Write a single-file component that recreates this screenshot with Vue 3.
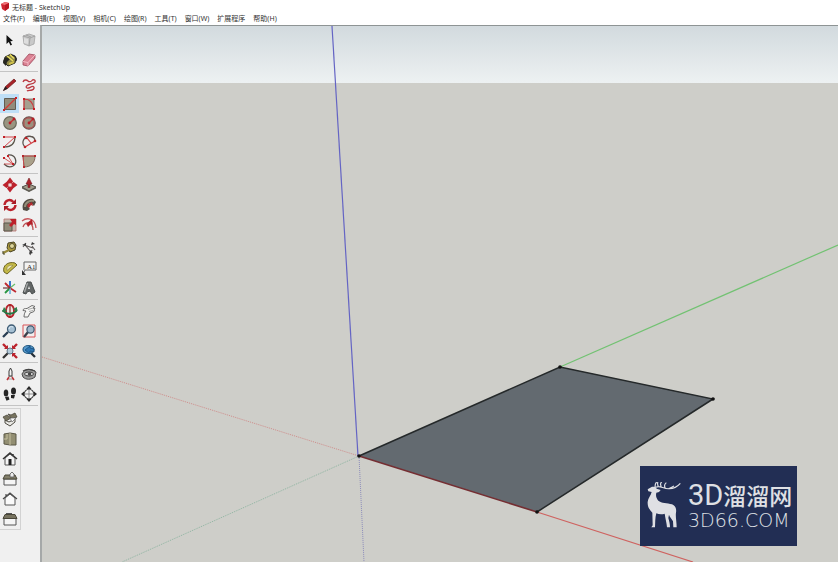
<script setup>
import { ref } from 'vue'

const menus = ['文件(F)', '编辑(E)', '视图(V)', '相机(C)', '绘图(R)', '工具(T)', '窗口(W)', '扩展程序', '帮助(H)']

const active = ref('矩形')

const groups = [
  {
    dense: false,
    tools: [
      { name: '选择', art: '<path d="M6.500 5v9l2.300-2.100 1.700 3.600 1.500-.7-1.700-3.500 2.700-.4z" fill="#111"/>' },
      { name: '制作组件', art: '<path d="M4 6l6-2 6 2-1 8-5 2-5-2z" fill="#c9c9c9" stroke="#a3a3a3" stroke-width=".8"/><path d="M4 6l7 2 5-2M11 8l-1 8M7 5l5 2" fill="none" stroke="#999" stroke-width=".8"/><path d="M5 8l4 1v5l-4-1z" fill="#dedede"/>' },
      { name: '材质', art: '<path d="M5 7l6-3 5 4-1 5-7 3-4-4z" fill="#8d8748" stroke="#2b2a1a" stroke-width="1"/><path d="M3 13c0-6 4-7 7-4l-3 3-1 4z" fill="#262620"/><path d="M7 6l6 5M10 4.500l4 4" stroke="#e8dc5c" stroke-width="1.500"/><path d="M9 14l5-2" stroke="#cfc14c" stroke-width="2"/><path d="M12 5c3 0 5 3 4 6" fill="none" stroke="#222" stroke-width="1.200"/>' },
      { name: '擦除', art: '<path d="M4 11l6-7 6 1v3l-7 8-5-1z" fill="#db8293" stroke="#9e4659" stroke-width=".8"/><path d="M4 11.500l5 1 7-7.500M9 12.500V16" fill="none" stroke="#f3bdc7" stroke-width="1"/>' },
    ],
  },
  {
    dense: true,
    tools: [
      { name: '直线', art: '<path d="M3.500 15.500l2-4L14 4l2 2-8.500 7.500z" fill="#a92328" stroke="#6a1719" stroke-width=".7"/><path d="M3 16l2.500-4.500 2 2z" fill="#222"/>' },
      { name: '手绘线', art: '<path d="M4 7c1-3 4-2 5-1s3 1 4-.5 4-.5 3 1.500-4 2-6 2.500-4 2.500-2 3.500 4-2 6-1.500 1 3-1 3.500-4 0-5 1" fill="none" stroke="#bb3a42" stroke-width="1.300"/>' },
      { name: '矩形', art: '<path d="M4.500 4.500h11v11h-11z" fill="#918d7c" stroke="#625c51" stroke-width="1"/><path d="M4 16L16 4" stroke="#d23a35" stroke-width="1.200"/><path d="M3 15h2v2H3zM15 3h2v2h-2z" fill="#c92128"/>' },
      { name: '旋转矩形', art: '<path d="M5 5h10v10H5z" fill="#a5a08f" stroke="#777267" stroke-width=".8"/><path d="M5 15V5c6 0 9 3 10 10" fill="none" stroke="#cf363b" stroke-width="1.100"/><path d="M4 4h2v2H4zM4 14h2v2H4zM14 14h2v2h-2zM14 4h2v2h-2z" fill="#c61f27"/>' },
      { name: '圆', art: '<circle cx="10" cy="10" r="6.300" fill="#999581" stroke="#6a695b" stroke-width="1.200"/><path d="M10 10l4-4" stroke="#c92a31" stroke-width="1.200"/><circle cx="10" cy="10" r="1.400" fill="#b81e27"/><circle cx="14" cy="6" r="1.400" fill="#b81e27"/>' },
      { name: '多边形', art: '<circle cx="10" cy="10" r="6.200" fill="#9a907e" stroke="#6a5751" stroke-width="1.300"/><path d="M7.500 5h5L15 7.500v5L12.500 15h-5L5 12.500v-5z" fill="none" stroke="#b94448" stroke-width="1"/><path d="M10 10l4-4" stroke="#c92a31" stroke-width="1.300"/><circle cx="10" cy="10" r="1.400" fill="#b81e27"/><circle cx="14" cy="6" r="1.400" fill="#b81e27"/>' },
      { name: '圆弧', art: '<path d="M4 5h11L4 15" fill="none" stroke="#cf4448" stroke-width="1"/><path d="M15 5c0 6-3 10-11 10" fill="none" stroke="#59554a" stroke-width="1.200"/><path d="M3 4h2v2H3zM14 4h2v2h-2zM3 14h2v2H3z" fill="#c12127"/>' },
      { name: '两点圆弧', art: '<path d="M6 15C1 10 6 3 12 4.500c3 .5 4 2.500 4 4.500" fill="none" stroke="#5e5550" stroke-width="1.300"/><path d="M6 15L16 9M8 6l4 5" fill="none" stroke="#cf3f44" stroke-width="1.200"/><circle cx="6" cy="15" r="1.300" fill="#bd2329"/><circle cx="16" cy="9" r="1.300" fill="#bd2329"/><circle cx="7" cy="6" r="1.300" fill="#bd2329"/>' },
      { name: '三点圆弧', art: '<path d="M8 4c8-1 10 8 5 11-4 2-7 0-9-2" fill="none" stroke="#56524b" stroke-width="1.300"/><path d="M4 7l9 6M8 5l5 8H4" fill="none" stroke="#ce4849" stroke-width=".9"/><path d="M3 6h2v2H3zM7 4h2v2H7zM12 12h2v2h-2z" fill="#c12127"/>' },
      { name: '扇形', art: '<path d="M4 5h12c0 7-4 11-11 11z" fill="#aaa18b" stroke="#7d695c" stroke-width="1"/><path d="M4 5h12M4 5l1 11" stroke="#c74c4c" stroke-width="1"/><path d="M3 4h2v2H3zM15 4h2v2h-2zM4 15h2v2H4z" fill="#b5282d"/>' },
    ],
  },
  {
    dense: false,
    tools: [
      { name: '移动', art: '<path d="M10 2.500l3.500 4.500-2 1.500h-3L6.500 7zM10 17.500l3.500-4.500-2-1.500h-3L6.500 13zM2.500 10L7 6.500l1.500 2v3L7 13.500zM17.500 10L13 6.500l-1.500 2v3l1.500 2z" fill="#bc222c"/><circle cx="10" cy="10" r="1.300" fill="#f0d9da"/>' },
      { name: '推/拉', art: '<path d="M3 12l7-3 7 3-7 4z" fill="#a09c8a" stroke="#535048" stroke-width="1"/><path d="M3 12l7 4 7-4v1.500L10 17l-7-3.500z" fill="#5b584f"/><path d="M9 12.500V9H7l3-6 3 6h-2v3.500z" fill="#ac232b" stroke="#711e21" stroke-width=".6"/>' },
      { name: '旋转', art: '<path d="M4.500 10c.5-5 5.500-6.500 9-3M15.500 10c-.5 5-5.500 6.500-9 3" fill="none" stroke="#bb222c" stroke-width="2.400"/><path d="M16 4v5h-5zM4 16v-5h5z" fill="#a91c26"/>' },
      { name: '路径跟随', art: '<path d="M4 15C2 7 8 3 14 4l3 3-2 4-3-3c-4 0-3 4-1 6l-3 2z" fill="#514b42"/><path d="M6 12c0-4 4-7 9-6" fill="none" stroke="#958e79" stroke-width="2"/><path d="M9 9l4-2 1 4-2-1-2 3-2-2z" fill="#b3292e"/>' },
      { name: '缩放', art: '<path d="M4 4h12v12H4z" fill="#c3b6ab" stroke="#b66f6d" stroke-width=".8"/><path d="M4 8h8v8H4z" fill="#918b79" stroke="#59564b"/><path d="M10 4h6v6l-2-1-3 3-2-2 3-3z" fill="#bd202a"/>' },
      { name: '偏移', art: '<path d="M4 12c2-6 10-6 10 3" fill="none" stroke="#bb5052" stroke-width="1.300"/><path d="M3 6c5-4 13-3 14 7" fill="none" stroke="#c75459" stroke-width="1.300"/><path d="M7 9l6-5 1 6-2-1-3 3-1-2z" fill="#b52129"/>' },
    ],
  },
  {
    dense: false,
    tools: [
      { name: '卷尺工具', art: '<path d="M8 5l6-1 2 3-1 5-5 2-3-4z" fill="#aa983b" stroke="#494323" stroke-width="1"/><circle cx="12" cy="8" r="2.500" fill="#ddd59a" stroke="#55502e"/><path d="M9 12l-6 3" stroke="#96893c" stroke-width="2.200"/><path d="M3 13v3h2" stroke="#4b482b" fill="none"/>' },
      { name: '尺寸', art: '<path d="M5 7l9 3M6 7l6 7M4 9l3-4M11 17l2-5M13 8l3 4" stroke="#5e5a5a" stroke-width="1.100"/><path d="M3 7l4-2 0 3zM13 4l3 2-4 1zM11 12l3 3-4 1z" fill="#3c3c3c"/>' },
      { name: '量角器', art: '<path d="M4 14C2 8 8 3 15 5L17 7 7 16z" fill="#c4b947" stroke="#6c6427" stroke-width="1"/><path d="M7 12.500C6 9 9 6.500 13 7.500z" fill="#eee9ba" stroke="#8f8740" stroke-width=".7"/>' },
      { name: '文字', art: '<path d="M5 12V4h12v8H6l-2 4" fill="#f3f3f3" stroke="#666" stroke-width="1"/><path d="M3 12v5h4z" fill="#333"/><text x="8" y="10.500" font-size="7" font-family="Liberation Serif" fill="#222">A1</text>' },
      { name: '轴', art: '<path d="M10 10V3" stroke="#246bc8" stroke-width="1.800"/><path d="M10 10l5-4" stroke="#65bd68" stroke-width="1.200"/><path d="M10 10l6 4M10 10L5 5" stroke="#bf2930" stroke-width="1.800"/><path d="M10 10l-5 5" stroke="#279540" stroke-width="1.800"/><path d="M10 10v6" stroke="#65aed8" stroke-width="1.500"/><path d="M3 10h7" stroke="#6f3338" stroke-width="1.200"/>' },
      { name: '三维文字', art: '<path d="M4 15L8 4h4l4 10-3 2-2-3-3 1-1 2z" fill="#626666" stroke="#4a4e4e" stroke-width="1"/><path d="M8.500 5l-3 9" fill="none" stroke="#a5a8a8" stroke-width="1.400"/><path d="M9 11l1-3 1 3z" fill="#eee"/>' },
    ],
  },
  {
    dense: false,
    tools: [
      { name: '环绕观察', art: '<path d="M9 4c-4 2-4 10 0 12h2c4-2 4-10 0-12z" fill="#f2e4e4" stroke="#b8242c" stroke-width="1.900"/><path d="M10 4v12" stroke="#8d302b" stroke-width="1.200"/><path d="M3 9c1 3 5 4 8 3.500s5-1.500 6-4" fill="none" stroke="#217844" stroke-width="2"/><path d="M2 11l2-5 3 4zM17 11l0-5-4 2z" fill="#31814c"/>' },
      { name: '平移', art: '<path d="M5 16c0-3 1-5 2-6l-3-.5c0-2 2-2 4-2l5-3 3 1-2 1.500 2 .5-1 1.500 .5 1-1.500 1-3 1-2 4z" fill="#f5f5f3" stroke="#606060" stroke-width=".9"/><path d="M9 8.500l5-1.500M10 10.500l4-1" stroke="#8b8b8b" stroke-width=".7"/>' },
      { name: '缩放视图', art: '<path d="M3 16l5-5" stroke="#293d52" stroke-width="2.300"/><circle cx="11.500" cy="8" r="4" fill="#a6c0d3" stroke="#405d75" stroke-width="1.300"/><path d="M9 8c0-2 2-3 4-2" stroke="#e4eff7" fill="none"/>' },
      { name: '缩放窗口', art: '<path d="M4 4h12v12H4z" fill="#f2eeee" stroke="#d95257" stroke-width="1"/><path d="M5 16l4-5" stroke="#3a3f49" stroke-width="2.300"/><circle cx="11.500" cy="8.500" r="3.600" fill="#9eb7c9" stroke="#3f5a72" stroke-width="1.200"/>' },
      { name: '充满视窗', art: '<path d="M3 3l4 4M17 3l-4 4M17 17l-4-4" stroke="#bb222c" stroke-width="2.400"/><path d="M8 4v4H4zM12 4v4h4zM12 16v-4h4z" fill="#bb222c"/><path d="M3 17l5-5" stroke="#333" stroke-width="2.300"/><circle cx="10" cy="10" r="3" fill="#b5cad8" stroke="#64798a" stroke-width="1"/>' },
      { name: '上一个', art: '<path d="M11 11l5 5" stroke="#252e38" stroke-width="2.300"/><ellipse cx="9.500" cy="8.500" rx="5.500" ry="4" fill="#569bce" stroke="#245981" stroke-width="1.200"/><path d="M15 8l-4-1V5L6 9l5 4v-3l4 1z" fill="#2e77b3" stroke="#184d7c" stroke-width=".8"/>' },
    ],
  },
  {
    dense: false,
    tools: [
      { name: '定位相机', art: '<path d="M9 12h3l1 3H8z" fill="#eee" stroke="#888" stroke-width=".8"/><path d="M9 12V7l1.500-3L12 7v5z" fill="#f7f7f7" stroke="#393939" stroke-width="1"/><path d="M7 16l2-3M14 16l-2-3" stroke="#bf3439" stroke-width="1.500"/>' },
      { name: '绕轴旋转', art: '<path d="M3 10c2-5 9-6 14-2l-1 5c-4 3-9 3-12 0z" fill="#9b9b9b" stroke="#4a4a4a" stroke-width="1"/><ellipse cx="10" cy="10" rx="4.500" ry="2" fill="#d8d8d8" stroke="#3f3f3f"/><circle cx="10.500" cy="10" r="1.700" fill="#454545"/><path d="M4 7c3-2 8-2 12 0" fill="none" stroke="#444" stroke-width="1.200"/>' },
      { name: '漫游', art: '<ellipse cx="6" cy="9" rx="2.300" ry="3.500" fill="#252525"/><path d="M5 13l3.500-.5 1 3-3 1.200z" fill="#252525"/><ellipse cx="13.500" cy="7" rx="2.500" ry="3.500" fill="#252525"/><path d="M11 11l4 0-1 3.500-3-.5z" fill="#252525"/>' },
      { name: '剖切面', art: '<circle cx="10" cy="10" r="4.800" fill="#f4f4f4" stroke="#444" stroke-width="1.100"/><path d="M10 5v10M5 10h10" stroke="#777" stroke-width=".8"/><path d="M10 2l2.500 3h-5zM10 18l2.500-3h-5zM2 10l3-2.500v5zM18 10l-3-2.500v5z" fill="#292929"/>' },
    ],
  },
]

const views = [
  { name: '等轴', art: '<path d="M5 11l4 2 6-3v3l-5 4-5-3z" fill="#e9e8e4" stroke="#4e4c44" stroke-width="1"/><path d="M3 8l4-2 4 3-5 3zM8 5l3 1 4-2 2 4-5 2z" fill="#77735f" stroke="#4a473b" stroke-width=".8"/><path d="M10 9l6 0-4 4z" fill="#fafafa" stroke="#666" stroke-width=".7"/>' },
  { name: '俯视图', art: '<path d="M4 5l6-1 6 1v11l-6 0-6-1z" fill="#928e72" stroke="#5b5847" stroke-width="1"/><path d="M10 4v12M4 10h3v-5" stroke="#c4bf9f" stroke-width="1" fill="none"/>' },
  { name: '前视图', art: '<path d="M5 9v7h10V9l-5-4z" fill="#f5f5f5" stroke="#555" stroke-width="1"/><path d="M3 10l7-6 7 6M13 5v2" fill="none" stroke="#343434" stroke-width="1.500"/><path d="M8.500 10h3v6h-3z" fill="#222"/>' },
  { name: '右视图', art: '<path d="M4 10h12v6H4z" fill="#f5f5f5" stroke="#555" stroke-width="1"/><path d="M3 10l2-4h10l2 4z" fill="#827e69" stroke="#494639" stroke-width="1"/><path d="M10 5l2-2 2 2v3h-4z" fill="#eee" stroke="#555" stroke-width=".8"/>' },
  { name: '后视图', art: '<path d="M5 9v7h10V9l-5-4z" fill="#fafafa" stroke="#555" stroke-width="1"/><path d="M3 10l7-6 7 6M6 5v2" fill="none" stroke="#4b4b4b" stroke-width="1.200"/>' },
  { name: '左视图', art: '<path d="M4 9h12v7H4z" fill="#f5f5f5" stroke="#555" stroke-width="1"/><path d="M3 9.500l2-4h10l2 4z" fill="#77735f" stroke="#494639" stroke-width="1"/><path d="M6 4.500h6" stroke="#555" stroke-width="1"/>' },
]

const vertices = [
  [359, 456],
  [560, 367],
  [713, 399],
  [537, 512],
]
</script>

<template>
  <div class="app">
    <header class="header">
      <div class="titlebar">
        <svg class="logo" viewBox="0 0 8 9" aria-hidden="true">
          <path d="M0 2l4-2 4 1v5L4 9 1 7z" fill="#cf2732" />
          <path d="M0 2l4 1 4-2-4-1z" fill="#ef7379" />
          <path d="M4 3v6l4-3V1z" fill="#b81722" />
        </svg>
        <span>无标题 - SketchUp</span>
      </div>
      <nav class="menubar">
        <button v-for="m in menus" :key="m" type="button" class="menu">{{ m }}</button>
      </nav>
    </header>

    <div class="body">
      <aside class="sidebar">
        <div class="tools">
          <div v-for="(g, i) in groups" :key="i" class="group" :class="{ dense: g.dense }">
            <button
              v-for="t in g.tools"
              :key="t.name"
              type="button"
              class="tool"
              :class="{ active: active === t.name }"
              :aria-label="t.name"
              @click="active = t.name"
            >
              <svg viewBox="0 0 20 20" aria-hidden="true" v-html="t.art"></svg>
            </button>
          </div>
        </div>
        <div class="views">
          <button v-for="v in views" :key="v.name" type="button" class="tool" :aria-label="v.name">
            <svg viewBox="0 0 20 20" aria-hidden="true" v-html="v.art"></svg>
          </button>
        </div>
      </aside>

      <main class="viewport">
        <svg class="scene" viewBox="42 26 796 536" preserveAspectRatio="xMinYMin slice" aria-hidden="true">
          <defs>
            <linearGradient id="sky" x1="0" y1="0" x2="0" y2="1">
              <stop offset="0" stop-color="#d2dade" />
              <stop offset="1" stop-color="#edf1f2" />
            </linearGradient>
          </defs>
          <rect x="42" y="26" width="796" height="536" fill="#cecec9" />
          <rect x="42" y="26" width="796" height="57" fill="url(#sky)" />
          <g fill="none" stroke-width="1">
            <path d="M42 357L359 456" stroke="#cf8d8b" stroke-dasharray="1 1" />
            <path d="M359 456L122 562" stroke="#8fb5a2" stroke-dasharray="1 1" />
            <path d="M359 456L364 562" stroke="#8c8cbb" stroke-dasharray="1 1" />
            <path d="M332 26L358 456" stroke="#6464c4" stroke-width="1.200" />
            <path d="M560 367L838 245" stroke="#72c272" stroke-width="1.200" />
            <path d="M537 512L693 562" stroke="#cf625f" stroke-width="1.200" />
          </g>
          <path d="M359 456L560 367L713 399L537 512Z" fill="#636a70" />
          <path d="M359 456L560 367L713 399L537 512" fill="none" stroke="#25292a" stroke-width="1.500" />
          <path d="M359 456L537 512" stroke="#752e32" stroke-width="1.600" />
          <circle v-for="(p, i) in vertices" :key="i" :cx="p[0]" :cy="p[1]" r="1.800" fill="#111" />
        </svg>

        <div class="badge">
          <svg class="deer" viewBox="15 24 108 144" aria-hidden="true">
            <path
              d="M23 46L36 38L46 38L50 44L62 48L57 54L49 56C47 64 48 72 55 80C64 88 82 86 96 91C106 95 110 104 108 116C106 126 110 142 110 160L100 160L99 142C95 134 88 128 87 122L85 132C88 142 90 150 90 160L81 160C80 146 76 134 74 119C66 122 56 121 49 118C45 132 46 146 45 160L34 160L38 154L37 116C29 108 22 98 23 84C24 72 32 66 35 54L25 52Z"
              fill="#dfe0e4"
            />
            <path
              d="M46 40C44 32 46 28 50 24M48 40C58 32 72 46 88 44C102 44 112 38 121 28M55 37C52 32 52 28 54 22M64 38C60 32 62 26 66 22M76 42C72 36 74 30 79 26M86 44C92 42 98 38 102 36"
              fill="none"
              stroke="#dfe0e4"
              stroke-width="3.500"
            />
          </svg>
          <div class="words">
            <div class="brand"><span class="latin">3D</span><span>溜溜网</span></div>
            <div class="domain">3D66.COM</div>
          </div>
        </div>
      </main>
    </div>
  </div>
</template>

<style>
body {
  margin: 0;
}
</style>

<style scoped>
.app {
  display: flex;
  flex-direction: column;
  min-height: 100vh;
  background: #f0f0f0;
  color: #333;
  font-family: "Noto Sans", "Noto Sans CJK SC", sans-serif;
  font-size: 7px;
}
button {
  margin: 0;
  padding: 0;
  border: 0;
  background: none;
  color: inherit;
  font: inherit;
}
.header {
  background: #fff;
}
.titlebar {
  display: flex;
  align-items: center;
  gap: 3px;
  height: 13px;
  padding-left: 1px;
}
.logo {
  width: 8px;
  height: 9px;
}
.menubar {
  display: flex;
  gap: 8px;
  height: 12px;
  padding-left: 3px;
}
.menu {
  line-height: 12px;
  white-space: nowrap;
}
.body {
  display: flex;
  flex: 1;
}
.sidebar {
  flex: none;
  width: 40px;
  padding-top: 4px;
  box-sizing: border-box;
}
.group {
  display: grid;
  grid-template-columns: 19px 19px;
  grid-auto-rows: 20px;
  width: 38px;
  padding: 1px 0;
  border-bottom: 1px solid #c4c4c4;
}
.group.dense {
  grid-auto-rows: 19px;
  padding: 3px 0;
}
.tool {
  display: flex;
  align-items: center;
  justify-content: center;
}
.tool svg {
  flex: none;
  width: 20px;
  height: 20px;
}
.tool.active {
  background: #bfdff6;
}
.views {
  display: grid;
  grid-auto-rows: 20px;
  width: 20px;
  margin-top: 2px;
  border: 1px solid #d2d2d2;
  border-left: 0;
}
.viewport {
  position: relative;
  flex: 1;
  min-width: 0;
  border-top: 1px solid #8e9494;
  border-left: 2px solid #a5a8a8;
}
.scene {
  position: absolute;
  width: 100%;
  height: 100%;
}
.badge {
  position: absolute;
  right: 41px;
  bottom: 16px;
  display: flex;
  align-items: center;
  gap: 7px;
  width: 157px;
  height: 80px;
  padding-left: 5px;
  box-sizing: border-box;
  background: #222e54;
  color: #dfe0e4;
}
.deer {
  width: 36px;
  height: 48px;
}
.words {
  display: grid;
  gap: 2px;
}
.brand {
  display: flex;
  align-items: center;
  height: 26px;
  font-family: "Noto Sans CJK SC", sans-serif;
  font-size: 23px;
  line-height: 26px;
  font-weight: 500;
  white-space: nowrap;
}
.latin {
  font-family: Roboto, sans-serif;
  font-size: 29px;
  font-weight: 400;
}
.domain {
  font-family: "DejaVu Sans", sans-serif;
  font-size: 19px;
  font-weight: 200;
  line-height: 20px;
}
</style>
